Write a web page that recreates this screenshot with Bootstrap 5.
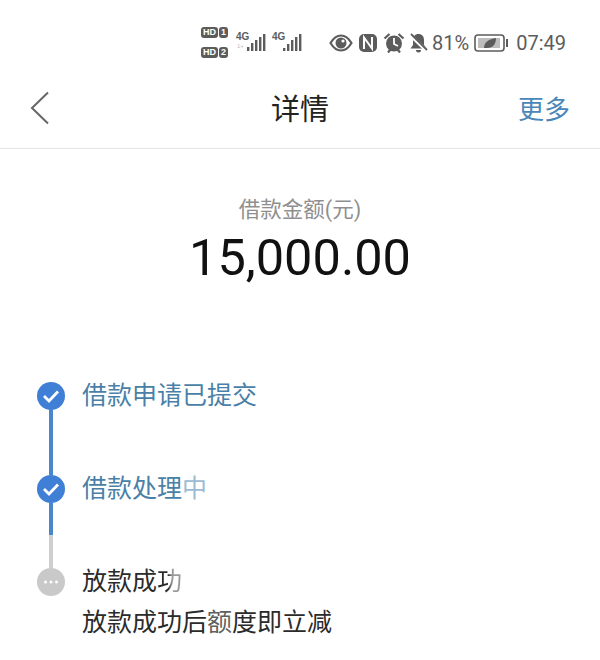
<!DOCTYPE html>
<html lang="zh-CN">
<head>
  <meta charset="UTF-8" />
  <meta name="viewport" content="width=device-width, initial-scale=1.0"/>
  <title>详情</title>
  <link rel="stylesheet" href="https://cdn.jsdelivr.net/npm/bootstrap@5.3.0/dist/css/bootstrap.min.css"/>
  <style>
    body {
      background-color: #fff;
      font-family: Roboto, "Noto Sans CJK SC", sans-serif;
      width: 600px;
      height: 660px;
      overflow: hidden;
    }
    .status-bar {
      height: 80px;
      padding: 25px 34px 0 201px;
      color: #5c5c5c;
    }
    .sim-col { width: 29px; gap: 9px; padding-top: 2px; }
    .hd-tag {
      font: 700 9px/11px "Liberation Sans", sans-serif;
      gap: 1px;
      height: 11px;
    }
    .hd-tag span {
      background: #5c5c5c;
      color: #fff;
      border-radius: 3px;
      padding: 0 2px;
    }
    .net { margin: 6px 0 0 6px; }
    .net.second { margin-left: 5px; }
    .status-text { font-size: 20px; line-height: 36px; }
    .gap-6 { margin-left: 6px; }
    .gap-5 { margin-left: 5px; }
    .title-bar {
      height: 69px;
      border-bottom: 1px solid #e6e6e6;
      padding: 0 30px 6px;
    }
    .back-col { width: 120px; margin-bottom: 6px; }
    .more-col { width: 120px; font-size: 26px; color: #4a86b8; margin-bottom: 2px; }
    .title-text { font-size: 29px; color: #222; }
    .amount-box { padding-top: 46px; }
    .amount-label { font-size: 21.5px; line-height: 30px; color: #8f8f8f; }
    .amount-num { font-size: 50.5px; line-height: 66px; color: #111; }
    .steps { padding: 91px 0 0 37px; }
    .step-mark { width: 28px; }
    .step-dot {
      width: 28px;
      height: 28px;
      border-radius: 50%;
      background: #3f7fd6;
      flex-shrink: 0;
    }
    .step-dot.off { background: #c9c9c9; }
    .step-line { width: 4px; height: 65px; background: #4a86cc; }
    .step-line.half { background: linear-gradient(#4a86cc 0 32px, #cfcfcf 32px); }
    .step-text { font-size: 25px; line-height: 28px; margin-left: 17px; color: #4a7fa8; white-space: nowrap; }
    .step-text.todo { color: #2b2b2b; }
    .step-note { margin-top: 12px; line-height: 30px; }
    .fade-blue { color: #9dbad2; }
    .fade-part {
      background: linear-gradient(90deg, #2b2b2b 45%, #9a9a9a 60%);
      -webkit-background-clip: text;
      background-clip: text;
      color: transparent;
    }
    .fade-mid { color: #5f5f5f; }
  </style>
</head>
<body>
  <div class="status-bar d-flex align-items-start">
    <div class="sim-col d-flex flex-column">
      <div class="hd-tag d-flex"><span>HD</span><span>1</span></div>
      <div class="hd-tag d-flex"><span>HD</span><span>2</span></div>
    </div>
    <svg class="net" width="31" height="24" viewBox="0 0 31 24" fill="#5c5c5c">
      <text x="0" y="9" font-family="Liberation Sans" font-weight="700" font-size="10">4G</text>
      <text x="1" y="17" font-family="Liberation Sans" font-size="6" fill="#bbb">1+</text>
      <rect x="11" y="16" width="2.4" height="4"/><rect x="15" y="12" width="2.4" height="8"/>
      <rect x="19" y="9" width="2.4" height="11"/><rect x="23" y="6" width="2.4" height="14"/>
      <rect x="27" y="3" width="2.4" height="17"/>
    </svg>
    <svg class="net second" width="31" height="24" viewBox="0 0 31 24" fill="#5c5c5c">
      <text x="0" y="9" font-family="Liberation Sans" font-weight="700" font-size="10">4G</text>
      <rect x="11" y="17" width="2.4" height="3"/><rect x="15" y="13" width="2.4" height="7"/>
      <rect x="19" y="9" width="2.4" height="11"/><rect x="23" y="6" width="2.4" height="14"/>
      <rect x="27" y="3" width="2.4" height="17"/>
    </svg>
    <div class="d-flex align-items-center ms-auto status-text">
      <svg width="24" height="36" viewBox="0 0 24 36">
        <path d="M1.500 18c3-5 6.500-7.500 10.500-7.500s7.500 2.500 10.500 7.500c-3 5-6.500 7.500-10.500 7.500s-7.500-2.500-10.500-7.500z" fill="none" stroke="#5c5c5c" stroke-width="2.200"/>
        <circle cx="12" cy="18" r="5.500" fill="#5c5c5c"/><circle cx="14" cy="16" r="1.600" fill="#fff"/>
      </svg>
      <svg class="gap-6" width="18" height="36" viewBox="0 0 18 36">
        <rect x="0" y="9" width="18" height="18" rx="5" fill="#5c5c5c"/>
        <path d="M5 24V12.500l8 11V12" fill="none" stroke="#fff" stroke-width="2"/>
      </svg>
      <svg class="gap-6" width="22" height="36" viewBox="0 0 22 36">
        <circle cx="11" cy="18.500" r="8" fill="#5c5c5c"/>
        <path d="M11 13v6l4 2" fill="none" stroke="#fff" stroke-width="1.800"/>
        <path d="M1.500 13.500l5-4.500M20.500 13.500l-5-4.500M5 27.500l2.500-3M17 27.500l-2.500-3" stroke="#5c5c5c" stroke-width="2.200"/>
      </svg>
      <svg class="ms-1" width="19" height="36" viewBox="0 0 19 36">
        <path d="M9.500 9c-3.500 0-5.500 2.500-5.500 6v5l-2.500 3.500h16L15 20v-5c0-3.500-2-6-5.500-6z" fill="#5c5c5c"/>
        <path d="M7 25h5a2.500 2.500 0 0 1-5 0z" fill="#5c5c5c"/>
        <path d="M1 10l17 16" stroke="#fff" stroke-width="3.500"/>
        <path d="M2 9l16 16" stroke="#5c5c5c" stroke-width="1.800"/>
      </svg>
      <span class="ms-1">81%</span>
      <svg class="gap-5" width="34" height="36" viewBox="0 0 34 36">
        <rect x="1" y="10" width="29" height="16" rx="3" fill="#fff" stroke="#5c5c5c" stroke-width="1.600"/>
        <rect x="4" y="13" width="22" height="10" fill="#bdbdbd"/>
        <path d="M10 23c0-6 5-9 12-10 0 6-3 10-9 10z" fill="#5c5c5c"/>
        <rect x="32" y="14" width="2" height="8" fill="#5c5c5c"/>
      </svg>
      <span class="ms-2">07:49</span>
    </div>
  </div>

  <div class="title-bar d-flex align-items-center">
    <div class="back-col">
      <svg class="d-block" width="20" height="34" viewBox="0 0 20 34">
        <path d="M18 1.500L2 17l16 15.500" fill="none" stroke="#666" stroke-width="2"/>
      </svg>
    </div>
    <div class="title-text flex-grow-1 text-center">详情</div>
    <div class="more-col text-end">更多</div>
  </div>

  <div class="amount-box text-center">
    <div class="amount-label">借款金额(元)</div>
    <div class="amount-num">15,000.00</div>
  </div>

  <div class="steps">
    <div class="d-flex">
      <div class="step-mark d-flex flex-column align-items-center">
        <div class="step-dot d-flex align-items-center justify-content-center">
          <svg width="18" height="14" viewBox="0 0 18 14"><path d="M2 7l5 5 9-9.500" fill="none" stroke="#fff" stroke-width="2.800"/></svg>
        </div>
        <div class="step-line"></div>
      </div>
      <div class="step-text">借款申请已提交</div>
    </div>
    <div class="d-flex">
      <div class="step-mark d-flex flex-column align-items-center">
        <div class="step-dot d-flex align-items-center justify-content-center">
          <svg width="18" height="14" viewBox="0 0 18 14"><path d="M2 7l5 5 9-9.500" fill="none" stroke="#fff" stroke-width="2.800"/></svg>
        </div>
        <div class="step-line half"></div>
      </div>
      <div class="step-text">借款处理<span class="fade-blue">中</span></div>
    </div>
    <div class="d-flex">
      <div class="step-mark">
        <div class="step-dot off d-flex align-items-center justify-content-center">
          <svg width="16" height="4" viewBox="0 0 16 4" fill="#fff"><circle cx="2.500" cy="2" r="1.500"/><circle cx="8" cy="2" r="1.500"/><circle cx="13.500" cy="2" r="1.500"/></svg>
        </div>
      </div>
      <div class="step-text todo">
        <div>放款成<span class="fade-part">功</span></div>
        <div class="step-note">放款成功后<span class="fade-mid">额</span>度即立减</div>
      </div>
    </div>
  </div>
</body>
</html>
